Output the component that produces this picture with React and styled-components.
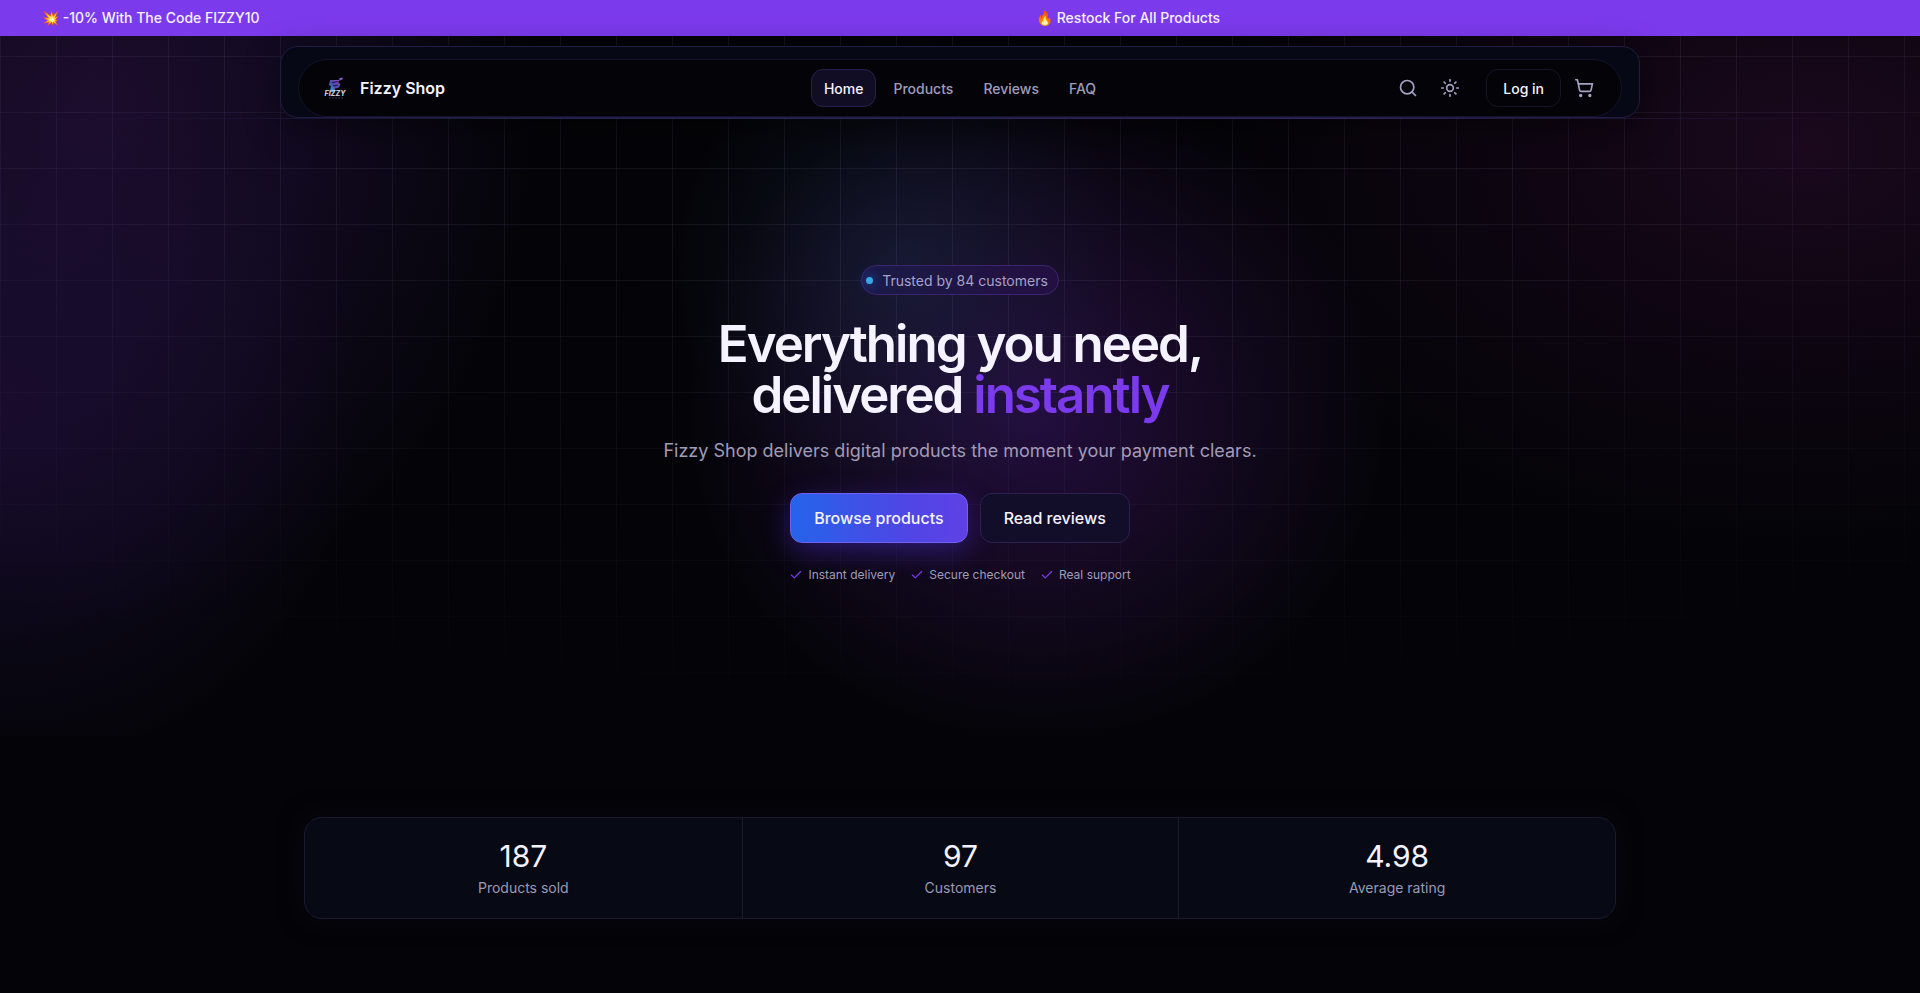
import React from 'react'
import styled, { createGlobalStyle } from 'styled-components'
import { Search, Sun, ShoppingCart, Check } from 'lucide-react'

const GlobalStyle = createGlobalStyle`
  * {
    box-sizing: border-box;
  }

  body {
    margin: 0;
    background: #040408;
    color: #f5f3ff;
    font-family: Inter, "Liberation Sans", sans-serif;
    font-size: 14px;
    overflow-x: hidden;
  }

  a {
    color: inherit;
    text-decoration: none;
  }
`

const Page = styled.div`
  position: relative;
  min-height: 100vh;
  overflow: hidden;
  isolation: isolate;
`

const Backdrop = styled.div`
  position: absolute;
  inset: 0 0 auto;
  height: 736px;
  z-index: -1;
  background:
    radial-gradient(230px 240px at 47% 37%, rgba(30, 46, 80, 0.45), rgba(30, 46, 80, 0.2) 50%, transparent),
    radial-gradient(350px 330px at 54% 56%, rgba(46, 16, 80, 0.75), rgba(36, 14, 58, 0.5) 50%, transparent),
    radial-gradient(600px 400px at 94% 20%, rgba(36, 10, 38, 0.7), rgba(30, 8, 32, 0.35) 50%, transparent),
    radial-gradient(440px 520px at 5% 14%, rgba(35, 15, 56, 0.75), rgba(30, 15, 54, 0.55) 45%, transparent),
    radial-gradient(360px 360px at 0% 56%, rgba(34, 14, 62, 0.6), rgba(26, 14, 54, 0.4) 50%, transparent);
`

const Grid = styled.div`
  position: absolute;
  inset: 0 0 auto;
  height: 736px;
  z-index: -1;
  background-image:
    linear-gradient(to right, rgba(148, 144, 190, 0.1) 1px, transparent 1px),
    linear-gradient(to bottom, rgba(148, 144, 190, 0.1) 1px, transparent 1px);
  background-size: 56px 56px;
  mask-image: radial-gradient(1800px 740px at 50% 0, #000 40%, transparent);
`

const Promo = styled.div`
  display: grid;
  grid-template-columns: 994px 1fr;
  height: 36px;
  padding-left: 42px;
  background: #7c3aed;
  font-weight: 500;
  line-height: 35px;
  white-space: nowrap;
`

const Header = styled.header`
  position: relative;
  padding-top: 10px;
`

const HeaderLine = styled.div`
  height: 1px;
  background: linear-gradient(to right, transparent 4%, #252452 30%, #33245f 70%, transparent 96%);
`

const NavShell = styled.div`
  width: calc(100% - 32px);
  max-width: 1360px;
  margin: 0 auto;
  padding: 12px 17px 0;
  border: 1px solid #211d45;
  border-radius: 18px;
  background: #070815;
  box-shadow: 0 10px 36px rgba(0, 0, 0, 0.45);
`

const NavBar = styled.div`
  display: grid;
  grid-template-columns: 1fr auto 1fr;
  align-items: center;
  height: 58px;
  padding: 0 18px;
  border: 1px solid #14122c;
  border-radius: 29px;
  background: #040308;
`

const Brand = styled.a`
  display: flex;
  align-items: center;
  gap: 7px;
  font-size: 16px;
  font-weight: 600;
`

const Nav = styled.nav`
  display: flex;
  gap: 4px;
`

const NavLink = styled.a`
  display: flex;
  align-items: center;
  height: 38px;
  padding: 0 12px;
  border: 1px solid ${props => (props.$active ? '#281f50' : 'transparent')};
  border-radius: 12px;
  background: ${props => (props.$active ? '#110d24' : 'transparent')};
  color: ${props => (props.$active ? '#f5f3ff' : '#a09dbb')};
  font-weight: 500;
`

const Actions = styled.div`
  display: flex;
  justify-content: flex-end;
  align-items: center;
  gap: 4px;
`

const IconButton = styled.button`
  display: grid;
  place-items: center;
  width: 38px;
  height: 38px;
  padding: 0;
  border: 0;
  background: transparent;
  color: #a5a2c4;
`

const LoginLink = styled.a`
  display: flex;
  align-items: center;
  height: 38px;
  margin-left: 13px;
  padding: 0 16px;
  border: 1px solid #161426;
  border-radius: 12px;
  font-weight: 500;
`

const Hero = styled.section`
  display: flex;
  flex-direction: column;
  align-items: center;
  padding: 146px 24px 0;
  text-align: center;
`

const Trust = styled.div`
  display: flex;
  align-items: center;
  gap: 9px;
  height: 30px;
  padding: 0 10px 0 4px;
  border: 1px solid #3b2570;
  border-radius: 15px;
  background: linear-gradient(to right, #1a1b48, #240f42);
  color: #a6a1c7;
`

const Dot = styled.span`
  width: 7px;
  height: 7px;
  border-radius: 50%;
  background: #38a9e4;
  box-shadow: 0 0 12px #2563eb;
`

const Title = styled.h1`
  margin: 23px 0 0;
  font-size: 51px;
  font-weight: 600;
  line-height: 51px;
  letter-spacing: -2px;
`

const Accent = styled.span`
  color: #7c3aed;
`

const Lead = styled.p`
  margin: 17px 0 0;
  color: #a09bb8;
  font-size: 18px;
  line-height: 28px;
`

const Buttons = styled.div`
  display: flex;
  gap: 12px;
  margin-top: 28px;
`

const HeroButton = styled.a`
  display: flex;
  align-items: center;
  height: 50px;
  padding: 0 23px;
  border: 1px solid ${props => (props.$primary ? '#7261f0' : '#2a2350')};
  border-radius: 12px;
  background: ${props => (props.$primary ? 'linear-gradient(to right, #2563eb, #4f46e5 65%, #5f41e6)' : '#120e2a')};
  box-shadow: ${props => (props.$primary ? '0 8px 28px rgba(79, 50, 229, 0.42)' : 'none')};
  font-size: 16px;
  font-weight: 500;
`

const Perks = styled.ul`
  display: flex;
  gap: 15px;
  margin: 24px 0 0;
  padding: 0;
  color: #a09bb8;
  font-size: 12px;
  line-height: 16px;
  list-style: none;
`

const Perk = styled.li`
  display: flex;
  align-items: center;
  gap: 5px;

  svg {
    color: #7c3aed;
  }
`

const Stats = styled.section`
  display: grid;
  grid-template-columns: repeat(3, 1fr);
  width: calc(100% - 32px);
  max-width: 1312px;
  margin: 234px auto 72px;
  border: 1px solid #1b1930;
  border-radius: 18px;
  background: #070a15;
  box-shadow: 0 0 24px rgba(8, 8, 18, 0.8);
`

const Stat = styled.div`
  padding: 20px 0;
  text-align: center;

  & + & {
    border-left: 1px solid #1b1930;
  }
`

const StatValue = styled.div`
  font-size: 30px;
  line-height: 36px;
`

const StatLabel = styled.div`
  margin-top: 4px;
  color: #9c99b4;
  line-height: 20px;
`

const links = ['Home', 'Products', 'Reviews', 'FAQ']

const perks = ['Instant delivery', 'Secure checkout', 'Real support']

const stats = [
  { value: '187', label: 'Products sold' },
  { value: '97', label: 'Customers' },
  { value: '4.98', label: 'Average rating' }
]

const Logo = () => (
  <svg width="36" height="36" viewBox="0 0 36 36" aria-hidden="true">
    <defs>
      <linearGradient id="cup" x1="0" y1="1" x2="1" y2="0">
        <stop offset="0" stopColor="#38bdf8" />
        <stop offset="0.5" stopColor="#4a4aa8" />
        <stop offset="1" stopColor="#a04bd0" />
      </linearGradient>
    </defs>
    <path d="M13 10h9.500l-1 3.500h2l-1.500 4-4 1-1 3.500h-4l1-6-2-1z" fill="url(#cup)" />
    <path d="M22 8.500l3-1 1 1.500-3 1.500z" fill="#8b5fd0" />
    <path d="M15 12.500l7-1M16 16l5-1" stroke="#1a1740" strokeWidth="1" />
    <text x="18" y="26" textAnchor="middle" fontSize="7" fontWeight="800" fontStyle="italic" fill="#c4c8dc">FIZZY</text>
    <path d="M12 28h14" stroke="#3a2d66" strokeWidth="1" strokeDasharray="2 1" />
  </svg>
)

const App = () => (
  <>
    <GlobalStyle />
    <Page>
      <Backdrop />
      <Grid />
      <Promo>
        <span>💥 -10% With The Code FIZZY10</span>
        <span>🔥 Restock For All Products</span>
      </Promo>
      <Header>
        <NavShell>
          <NavBar>
            <Brand href="#">
              <Logo />
              Fizzy Shop
            </Brand>
            <Nav>
              {links.map((link, i) => (
                <NavLink key={link} href="#" $active={i === 0}>{link}</NavLink>
              ))}
            </Nav>
            <Actions>
              <IconButton aria-label="Search"><Search size={20} /></IconButton>
              <IconButton aria-label="Toggle theme"><Sun size={20} /></IconButton>
              <LoginLink href="#">Log in</LoginLink>
              <IconButton aria-label="Cart"><ShoppingCart size={20} /></IconButton>
            </Actions>
          </NavBar>
        </NavShell>
        <HeaderLine />
      </Header>
      <Hero>
        <Trust>
          <Dot />
          Trusted by 84 customers
        </Trust>
        <Title>
          Everything you need,
          <br />
          delivered <Accent>instantly</Accent>
        </Title>
        <Lead>Fizzy Shop delivers digital products the moment your payment clears.</Lead>
        <Buttons>
          <HeroButton href="#" $primary>Browse products</HeroButton>
          <HeroButton href="#">Read reviews</HeroButton>
        </Buttons>
        <Perks>
          {perks.map(perk => (
            <Perk key={perk}>
              <Check size={14} />
              {perk}
            </Perk>
          ))}
        </Perks>
      </Hero>
      <Stats>
        {stats.map(stat => (
          <Stat key={stat.label}>
            <StatValue>{stat.value}</StatValue>
            <StatLabel>{stat.label}</StatLabel>
          </Stat>
        ))}
      </Stats>
    </Page>
  </>
)

export default App
